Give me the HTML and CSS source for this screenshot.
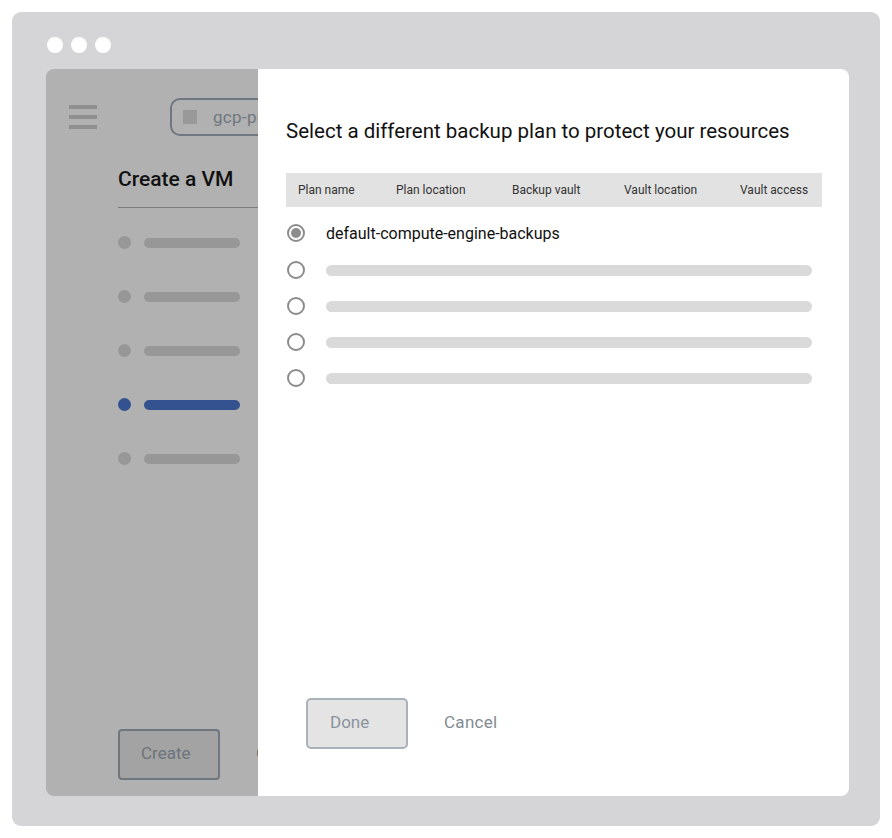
FILE: index.html
```html
<!DOCTYPE html>
<html lang="en">
<head>
    <meta charset="UTF-8">
    <meta name="viewport" content="width=device-width, initial-scale=1.0">
    <title>Select backup plan</title>
    <link rel="stylesheet" href="styles.css">
</head>
<body>
    <div class="frame">
        <div class="frame-dots">
            <span class="dot"></span>
            <span class="dot"></span>
            <span class="dot"></span>
        </div>
        <div class="window">
            <!-- Page underneath, dimmed by the side panel -->
            <div class="page">
                <div class="page-inner">
                    <div class="topbar">
                        <div class="menu">
                            <span></span>
                            <span></span>
                            <span></span>
                        </div>
                        <div class="chip">
                            <span class="chip-icon"></span>
                            <span class="chip-text">gcp-project</span>
                        </div>
                    </div>
                    <h1 class="page-title">Create a VM</h1>
                    <ul class="steps">
                        <li class="step"><span class="step-dot"></span><span class="step-bar"></span></li>
                        <li class="step"><span class="step-dot"></span><span class="step-bar"></span></li>
                        <li class="step"><span class="step-dot"></span><span class="step-bar"></span></li>
                        <li class="step active"><span class="step-dot"></span><span class="step-bar"></span></li>
                        <li class="step"><span class="step-dot"></span><span class="step-bar"></span></li>
                    </ul>
                    <div class="page-actions">
                        <button class="btn-create">Create</button>
                        <button class="btn-link">Cancel</button>
                    </div>
                </div>
            </div>

            <!-- Side panel -->
            <div class="panel">
                <h2 class="panel-title">Select a different backup plan to protect your resources</h2>
                <div class="table-head">
                    <span>Plan name</span>
                    <span>Plan location</span>
                    <span>Backup vault</span>
                    <span>Vault location</span>
                    <span>Vault access</span>
                </div>
                <div class="rows">
                    <label class="row">
                        <span class="radio checked"></span>
                        <span class="row-label">default-compute-engine-backups</span>
                    </label>
                    <label class="row">
                        <span class="radio"></span>
                        <span class="row-bar"></span>
                    </label>
                    <label class="row">
                        <span class="radio"></span>
                        <span class="row-bar"></span>
                    </label>
                    <label class="row">
                        <span class="radio"></span>
                        <span class="row-bar"></span>
                    </label>
                    <label class="row">
                        <span class="radio"></span>
                        <span class="row-bar"></span>
                    </label>
                </div>
                <div class="panel-actions">
                    <button class="btn-done">Done</button>
                    <button class="btn-link">Cancel</button>
                </div>
            </div>
        </div>
    </div>
</body>
</html>
```

FILE: styles.css
```css
body {
    margin: 0;
    background: #ffffff;
    font-family: Roboto, "Liberation Sans", sans-serif;
}

.frame {
    margin: 12px;
    width: 868px;
    height: 814px;
    box-sizing: border-box;
    padding: 25px 31px 30px 34px;
    background: #d5d5d7;
    border-radius: 9px;
    display: flex;
    flex-direction: column;
}

.frame-dots {
    display: flex;
    gap: 8px;
    height: 32px;
    margin-left: 1px;
}

.dot {
    width: 16px;
    height: 16px;
    border-radius: 50%;
    background: #ffffff;
}

.window {
    flex: 1;
    display: flex;
    border-radius: 8px;
    overflow: hidden;
}

/* dimmed page */
.page {
    width: 212px;
    flex-shrink: 0;
    background: #b1b1b1;
    overflow: hidden;
}

.page-inner {
    width: 420px;
    height: 100%;
    box-sizing: border-box;
    padding: 29px 0 16px 23px;
    display: flex;
    flex-direction: column;
}

.topbar {
    display: flex;
    align-items: center;
    height: 38px;
}

.menu {
    display: flex;
    flex-direction: column;
    gap: 6px;
    width: 28px;
}

.menu span {
    height: 4px;
    background: #8f8f8f;
}

.chip {
    margin-left: 73px;
    height: 38px;
    box-sizing: border-box;
    border: 2px solid #6f7780;
    border-radius: 10px;
    display: flex;
    align-items: center;
    padding: 0 16px 0 11px;
}

.chip-icon {
    width: 14px;
    height: 14px;
    background: #999999;
}

.chip-text {
    margin-left: 16px;
    font-size: 17px;
    letter-spacing: 0.3px;
    color: #6f7780;
}

.page-title {
    margin: 31px 0 0 49px;
    font-size: 21px;
    font-weight: 500;
    color: #111111;
    padding-bottom: 16px;
    border-bottom: 1px solid #7b7b7b;
    width: 300px;
}

.steps {
    list-style: none;
    margin: 28px 0 0 49px;
    padding: 0;
    display: flex;
    flex-direction: column;
    gap: 41px;
}

.step {
    display: flex;
    align-items: center;
    height: 13px;
}

.step-dot {
    width: 13px;
    height: 13px;
    border-radius: 50%;
    background: #979797;
}

.step-bar {
    margin-left: 13px;
    width: 96px;
    height: 10px;
    border-radius: 5px;
    background: #979797;
}

.step.active .step-dot,
.step.active .step-bar {
    background: #33528f;
}

.page-actions {
    margin: auto 0 0 49px;
    display: flex;
    align-items: center;
}

.btn-create {
    width: 102px;
    height: 51px;
    background: #a3a3a3;
    border: 2px solid #6e767e;
    border-radius: 4px;
    font-family: Roboto, sans-serif;
    font-size: 17px;
    color: #6c737a;
    text-align: left;
    padding: 0 0 3px 21px;
}

.btn-link {
    margin-left: 36px;
    background: none;
    border: none;
    font-family: Roboto, sans-serif;
    font-size: 17px;
    letter-spacing: 0.3px;
    color: #6c737a;
    padding: 0 0 3px;
}

/* side panel */
.panel {
    flex: 1;
    background: #ffffff;
    box-sizing: border-box;
    padding: 48px 27px 47px 28px;
    display: flex;
    flex-direction: column;
}

.panel-title {
    margin: 0;
    font-size: 20.5px;
    font-weight: 400;
    color: #111111;
    line-height: 28px;
}

.table-head {
    margin-top: 28px;
    height: 34px;
    background: #e2e2e2;
    display: grid;
    grid-template-columns: 98px 116px 112px 116px 1fr;
    align-items: center;
    padding-left: 12px;
    font-size: 12px;
    color: #333333;
}

.rows {
    margin-top: 7px;
    display: flex;
    flex-direction: column;
}

.row {
    display: flex;
    align-items: center;
    height: 36px;
}

.row:first-child {
    height: 38px;
}

.radio {
    width: 14px;
    height: 14px;
    border: 2px solid #8c8c8c;
    border-radius: 50%;
    margin-left: 1px;
    position: relative;
    flex-shrink: 0;
}

.radio.checked::after {
    content: "";
    position: absolute;
    inset: 2px;
    border-radius: 50%;
    background: #8c8c8c;
}

.row-label {
    margin-left: 21px;
    font-size: 16px;
    color: #111111;
}

.row-bar {
    margin-left: 21px;
    flex: 1;
    height: 11px;
    border-radius: 6px;
    background: #dadada;
    margin-right: 10px;
}

.panel-actions {
    margin: auto 0 0 20px;
    display: flex;
    align-items: center;
}

.btn-done {
    width: 102px;
    height: 51px;
    background: #e4e4e4;
    border: 2px solid #a9b2ba;
    border-radius: 5px;
    font-family: Roboto, sans-serif;
    font-size: 17px;
    color: #8a939b;
    text-align: left;
    padding: 0 0 3px 22px;
}

.panel-actions .btn-link {
    color: #838b93;
}
```
